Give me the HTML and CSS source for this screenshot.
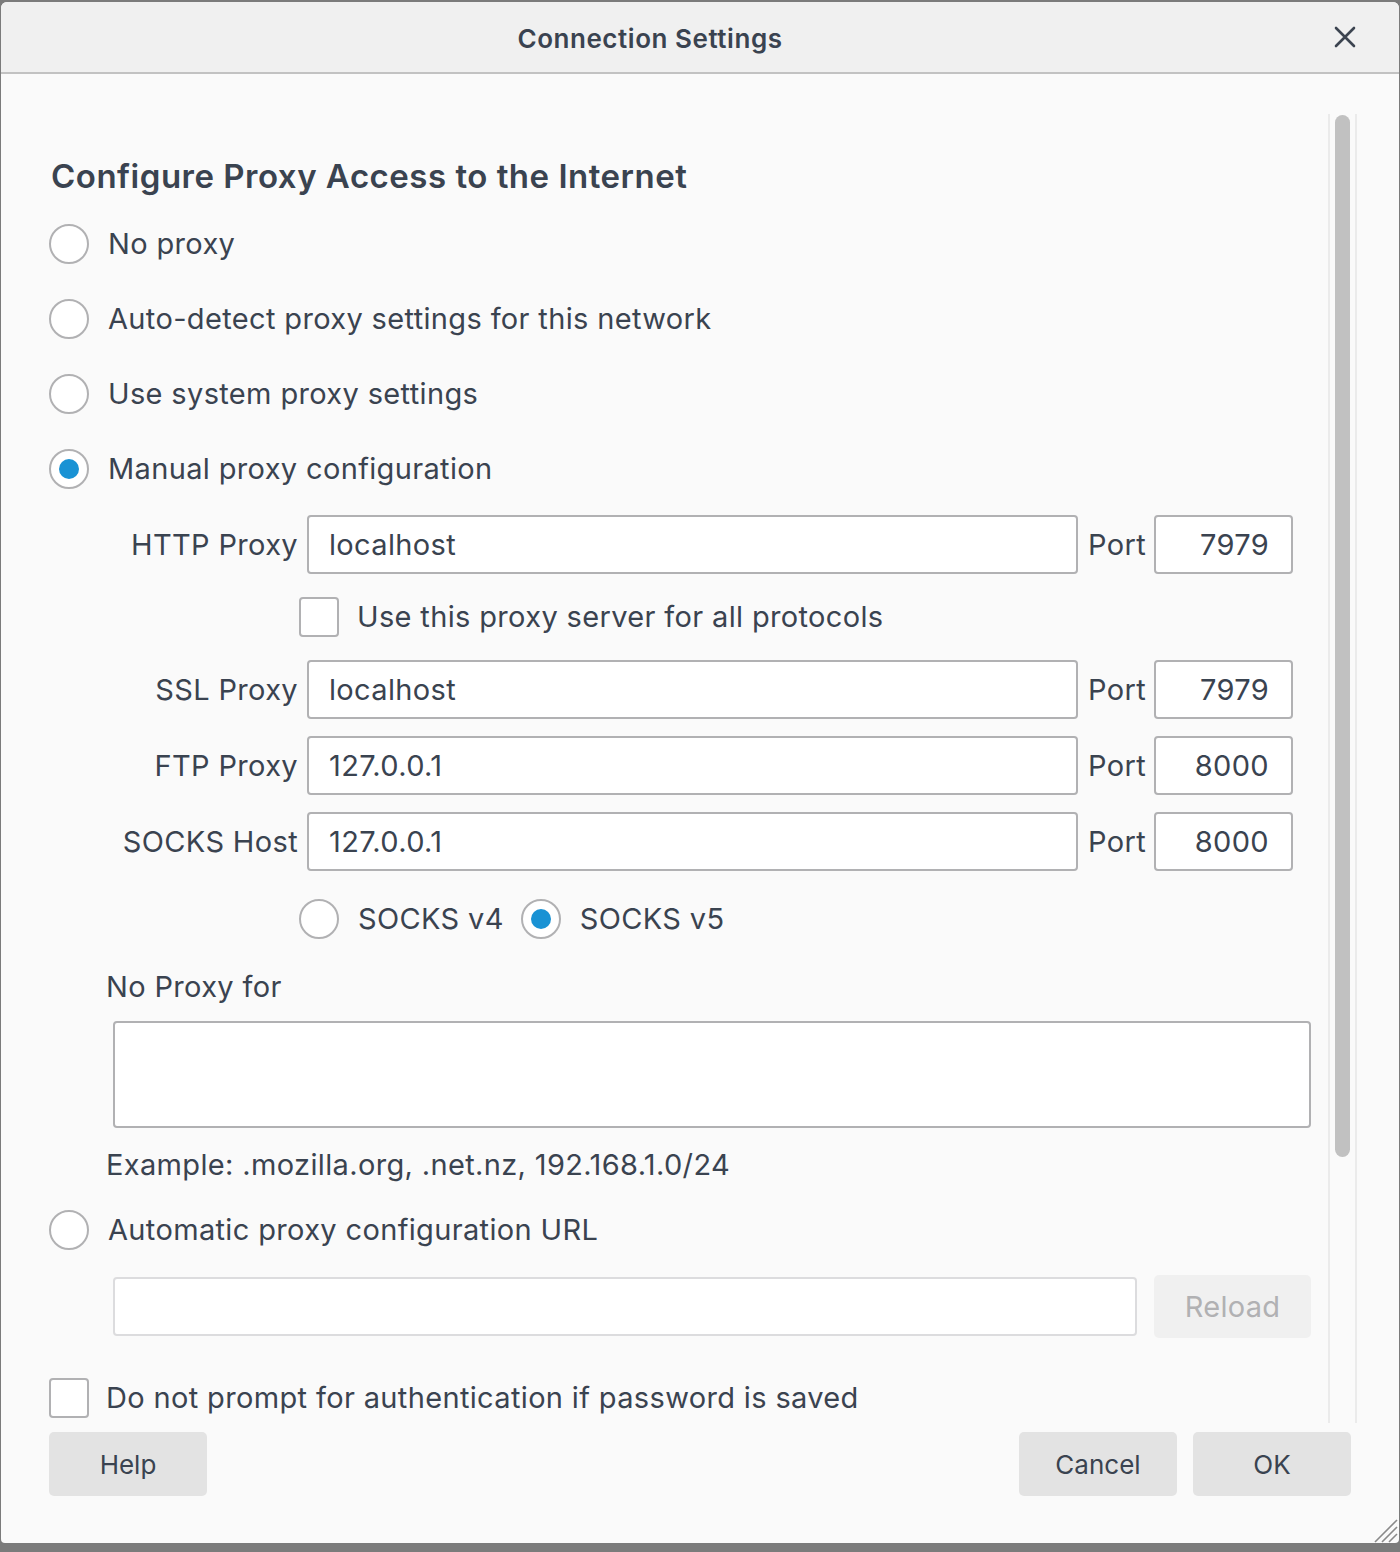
FILE: index.html
```html
<!DOCTYPE html>
<html>
<head>
<meta charset="utf-8">
<link rel="stylesheet" href="styles.css">
</head>
<body>
<div class="window">
  <div class="titlebar">
    <div class="title">Connection Settings</div>
    <div class="close">
      <svg width="22" height="22" viewBox="0 0 22 22"><path d="M2 2 L20 20 M20 2 L2 20" stroke="#3c4450" stroke-width="2.6" stroke-linecap="round" fill="none"/></svg>
    </div>
  </div>
  <div class="body">
    <div class="scroll">
      <div class="content">
        <h1 class="heading">Configure Proxy Access to the Internet</h1>
        <div class="radio-list">
          <div class="opt"><span class="radio"></span><span class="lbl">No proxy</span></div>
          <div class="opt"><span class="radio"></span><span class="lbl">Auto-detect proxy settings for this network</span></div>
          <div class="opt"><span class="radio"></span><span class="lbl">Use system proxy settings</span></div>
          <div class="opt"><span class="radio on"></span><span class="lbl">Manual proxy configuration</span></div>
        </div>

        <div class="manual">
          <div class="prow">
            <span class="plabel">HTTP Proxy</span>
            <span class="field host">localhost</span>
            <span class="portlbl">Port</span>
            <span class="field port">7979</span>
          </div>
          <div class="opt checkrow"><span class="check"></span><span class="lbl">Use this proxy server for all protocols</span></div>
          <div class="prow ssl">
            <span class="plabel">SSL Proxy</span>
            <span class="field host">localhost</span>
            <span class="portlbl">Port</span>
            <span class="field port">7979</span>
          </div>
          <div class="prow next">
            <span class="plabel">FTP Proxy</span>
            <span class="field host">127.0.0.1</span>
            <span class="portlbl">Port</span>
            <span class="field port">8000</span>
          </div>
          <div class="prow next">
            <span class="plabel">SOCKS Host</span>
            <span class="field host">127.0.0.1</span>
            <span class="portlbl">Port</span>
            <span class="field port">8000</span>
          </div>
          <div class="socks">
            <span class="radio"></span><span class="lbl">SOCKS v4</span>
            <span class="radio on second"></span><span class="lbl">SOCKS v5</span>
          </div>
          <div class="noproxy-lbl">No Proxy for</div>
          <div class="textarea"></div>
          <div class="example">Example: .mozilla.org, .net.nz, 192.168.1.0/24</div>
        </div>

        <div class="opt auto"><span class="radio"></span><span class="lbl">Automatic proxy configuration URL</span></div>
        <div class="urlrow">
          <span class="field url"></span>
          <span class="btn disabled">Reload</span>
        </div>
        <div class="opt authrow"><span class="check"></span><span class="lbl">Do not prompt for authentication if password is saved</span></div>
      </div>
    </div>
    <div class="track"><div class="thumb"></div></div>
  </div>
  <div class="buttons">
    <span class="btn">Help</span>
    <span class="spacer"></span>
    <span class="btn">Cancel</span>
    <span class="btn">OK</span>
  </div>
  <svg class="grip" width="26" height="26" viewBox="0 0 26 26"><path d="M25 3 L3 25 M25 10 L10 25 M25 17 L17 25" stroke="#8a8a8a" stroke-width="1.6" fill="none"/></svg>
</div>
</body>
</html>
```

FILE: styles.css
```css
* { box-sizing: border-box; }
html, body { margin: 0; padding: 0; }
body {
  background: #7b7b7b;
  width: 1400px;
  height: 1552px;
  overflow: hidden;
  font-family: Inter, "Liberation Sans", Arial, sans-serif;
  color: #3a4350;
  letter-spacing: 0.35px;
}
.window {
  position: relative;
  margin: 2px 1px 0 1px;
  height: 1541px;
  background: #fafafa;
  border-radius: 6px 6px 4px 4px;
  overflow: hidden;
  display: flex;
  flex-direction: column;
}
.titlebar {
  height: 72px;
  flex: none;
  background: #f0f0f0;
  border-bottom: 2px solid #c2c2c2;
  display: flex;
  align-items: center;
}
.title {
  flex: 1;
  text-align: center;
  font-size: 26px;
  font-weight: 600;
  letter-spacing: 0.55px;
  padding-top: 2px;
}
.close {
  width: 100px;
  display: flex;
  justify-content: center;
  padding-right: 8px;
  padding-bottom: 1px;
}
.body {
  flex: none;
  height: 1349px;
  padding-top: 40px;
  display: flex;
}
.scroll {
  width: 1327px;
  overflow: hidden;
}
.content {
  padding-left: 48px;
}
.track {
  width: 29px;
  height: 1309px;
  border-left: 2px solid #ebebeb;
  border-right: 2px solid #ebebeb;
  padding: 1px 5px 0 5px;
}
.thumb {
  height: 1042px;
  background: #c1c1c1;
  border-radius: 8px;
}
.heading {
  margin: 42px 0 0 2px;
  font-size: 33px;
  line-height: 40px;
  font-weight: 600;
  letter-spacing: 0.5px;
}
.lbl { font-size: 29px; line-height: 40px; white-space: nowrap; }
.opt {
  display: flex;
  align-items: center;
  height: 40px;
}
.radio-list {
  margin-top: 28px;
  display: flex;
  flex-direction: column;
  gap: 35px;
}
.radio {
  width: 40px;
  height: 40px;
  border-radius: 50%;
  border: 2px solid #b1b1b3;
  background: #fff;
  flex: none;
  display: flex;
  align-items: center;
  justify-content: center;
  margin-right: 19px;
}
.radio.on::after {
  content: "";
  width: 20px;
  height: 20px;
  border-radius: 50%;
  background: #1992d4;
}
.check {
  width: 40px;
  height: 40px;
  border-radius: 4px;
  border: 2px solid #b1b1b3;
  background: #fff;
  flex: none;
  margin-right: 18px;
}
.manual { margin-top: 26px; }
.prow {
  display: flex;
  align-items: center;
  height: 59px;
}
.plabel {
  width: 250px;
  text-align: right;
  padding-right: 1px;
  font-size: 29px;
  margin-right: 8px;
  white-space: nowrap;
}
.field {
  height: 59px;
  border: 2px solid #b1b1b3;
  border-radius: 4px;
  background: #fff;
  font-size: 29px;
  line-height: 55px;
  padding: 0 20px;
}
.field.host { width: 771px; }
.portlbl { font-size: 29px; margin: 0 8px 0 10px; }
.field.port { width: 139px; text-align: right; padding-right: 22px; }
.checkrow { margin-top: 23px; padding-left: 250px; }
.prow.ssl { margin-top: 23px; }
.prow.next { margin-top: 17px; }
.socks {
  margin-top: 28px;
  padding-left: 250px;
  display: flex;
  align-items: center;
  height: 40px;
}
.socks .second { margin-left: 17px; }
.noproxy-lbl {
  margin-top: 28px;
  padding-left: 57px;
  font-size: 29px;
  line-height: 40px;
}
.textarea {
  margin: 14px 0 0 64px;
  width: 1198px;
  height: 107px;
  border: 2px solid #b1b1b3;
  border-radius: 4px;
  background: #fff;
}
.example {
  margin-top: 17px;
  padding-left: 57px;
  font-size: 29px;
  line-height: 40px;
}
.opt.auto { margin-top: 25px; }
.urlrow {
  margin: 25px 0 0 64px;
  display: flex;
  align-items: center;
  gap: 17px;
}
.field.url { width: 1024px; border-color: #dcdcde; }
.btn {
  width: 158px;
  height: 64px;
  border-radius: 5px;
  background: #e3e3e3;
  font-size: 26px;
  letter-spacing: 0;
  display: flex;
  align-items: center;
  justify-content: center;
}
.btn.disabled {
  width: 157px;
  height: 63px;
  background: #f0f0f0;
  color: #b1b1b3;
  font-size: 29px;
  letter-spacing: 0.3px;
}
.authrow { margin-top: 40px; }
.authrow .check { margin-right: 17px; }
.buttons {
  flex: none;
  display: flex;
  gap: 16px;
  padding: 9px 48px 0 48px;
}
.spacer { flex: 1; }
.grip {
  position: absolute;
  right: 1px;
  bottom: 0;
}
```
